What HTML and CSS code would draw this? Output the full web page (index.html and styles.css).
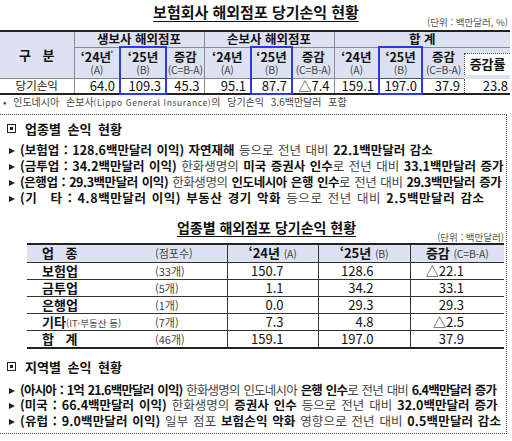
FILE: index.html
```html
<!DOCTYPE html>
<html lang="ko">
<head>
    <meta charset="UTF-8">
    <title>보험회사 해외점포 당기손익 현황</title>
    <link rel="stylesheet" href="styles.css">
</head>
<body>
    <div class="head">
        <div class="title">보험회사 해외점포 당기손익 현황</div>
        <div class="unit">(단위 : 백만달러, %)</div>
    </div>

    <table class="summary">
        <colgroup>
            <col><col><col><col><col><col><col><col><col><col><col>
        </colgroup>
        <tr class="grp">
            <th class="label first" rowspan="2">구 분</th>
            <th colspan="3">생보사 해외점포</th>
            <th colspan="3">손보사 해외점포</th>
            <th class="last" colspan="4">합 계</th>
        </tr>
        <tr class="sub">
            <th>‘24년<sup>ˈ</sup><span class="ab">(A)</span></th>
            <th class="hl">‘25년<span class="ab">(B)</span></th>
            <th>증감<span class="ab">(C=B-A)</span></th>
            <th>‘24년<span class="ab">(A)</span></th>
            <th class="hl">‘25년<span class="ab">(B)</span></th>
            <th>증감<span class="ab">(C=B-A)</span></th>
            <th>‘24년<span class="ab">(A)</span></th>
            <th class="hl">‘25년<span class="ab">(B)</span></th>
            <th>증감<span class="ab">(C=B-A)</span></th>
            <th class="rate last"><div class="rate-box">증감률</div></th>
        </tr>
        <tr class="data">
            <td class="label first">당기손익</td>
            <td>64.0</td>
            <td class="hl">109.3</td>
            <td>45.3</td>
            <td>95.1</td>
            <td class="hl">87.7</td>
            <td>△7.4</td>
            <td>159.1</td>
            <td class="hl">197.0</td>
            <td>37.9</td>
            <td class="rate last"><div class="rate-val">23.8</div></td>
        </tr>
    </table>

    <p class="note">• 인도네시아 손보사<small>(Lippo General Insurance)</small>의 당기손익 3.6백만달러 포함</p>

    <div class="box">
        <div class="sec"><span class="sq"></span>업종별 손익 현황</div>
        <ul class="lines">
            <li><b>(보험업 : 128.6백만달러 이익) 자연재해</b> 등으로 전년 대비 <b>22.1백만달러 감소</b></li>
            <li><b>(금투업 : 34.2백만달러 이익)</b> 한화생명의 <b>미국 증권사 인수</b>로 전년 대비 <b>33.1백만달러 증가</b></li>
            <li class="tight"><b>(은행업 : 29.3백만달러 이익)</b> 한화생명의 <b>인도네시아 은행 인수</b>로 전년 대비 <b>29.3백만달러 증가</b></li>
            <li class="loose"><b>(기　타 : 4.8백만달러 이익) 부동산 경기 악화</b> 등으로 전년 대비 <b>2.5백만달러 감소</b></li>
        </ul>

        <div class="head head-sm">
            <div class="title">업종별 해외점포 당기손익 현황</div>
            <div class="unit">(단위 : 백만달러)</div>
        </div>

        <table class="sector">
            <colgroup>
                <col><col><col><col><col>
            </colgroup>
            <tr>
                <th class="name">업 종</th>
                <th class="cnt">(점포수)</th>
                <th>‘24년 <span class="ab">(A)</span></th>
                <th>‘25년 <span class="ab">(B)</span></th>
                <th>증감 <span class="ab">(C=B-A)</span></th>
            </tr>
            <tr>
                <td class="name">보험업</td>
                <td class="cnt">(33개)</td>
                <td>150.7</td>
                <td>128.6</td>
                <td>△22.1</td>
            </tr>
            <tr>
                <td class="name">금투업</td>
                <td class="cnt">(5개)</td>
                <td>1.1</td>
                <td>34.2</td>
                <td>33.1</td>
            </tr>
            <tr>
                <td class="name">은행업</td>
                <td class="cnt">(1개)</td>
                <td>0.0</td>
                <td>29.3</td>
                <td>29.3</td>
            </tr>
            <tr>
                <td class="name">기타<small>(IT·부동산 등)</small></td>
                <td class="cnt">(7개)</td>
                <td>7.3</td>
                <td>4.8</td>
                <td>△2.5</td>
            </tr>
            <tr>
                <td class="name">합 계</td>
                <td class="cnt">(46개)</td>
                <td>159.1</td>
                <td>197.0</td>
                <td>37.9</td>
            </tr>
        </table>

        <div class="sec sec-2"><span class="sq"></span>지역별 손익 현황</div>
        <ul class="lines lines-2">
            <li class="squeeze"><b>(아시아 : 1억 21.6백만달러 이익)</b> 한화생명의 인도네시아 <b>은행 인수</b>로 전년 대비 <b>6.4백만달러 증가</b></li>
            <li class="wide"><b>(미국 : 66.4백만달러 이익)</b> 한화생명의 <b>증권사 인수</b> 등으로 전년 대비 <b>32.0백만달러 증가</b></li>
            <li class="airy"><b>(유럽 : 9.0백만달러 이익)</b> 일부 점포 <b>보험손익 악화</b> 영향으로 전년 대비 <b>0.5백만달러 감소</b></li>
        </ul>
    </div>
</body>
</html>
```

FILE: styles.css
```css
body {
    margin: 0;
    width: 512px;
    background: #fff;
    color: #111;
    font-family: "Noto Sans CJK KR", "Noto Sans", sans-serif;
}

/* titles */
.head {
    display: grid;
    height: 30px;
}

.head > * {
    grid-area: 1 / 1;
}

.title {
    justify-self: center;
    margin-top: 2px;
    font-size: 15px;
    line-height: 20px;
    font-weight: bold;
    text-decoration: underline;
    text-underline-offset: 3px;
}

.unit {
    justify-self: end;
    align-self: end;
    margin: 0 4px 3px 0;
    font-size: 9.5px;
    line-height: 10px;
    color: #555;
}

.head-sm {
    height: 28px;
    margin: 9px 0 0 27px;
}

.head-sm .title {
    margin-top: 3px;
    font-size: 14px;
    line-height: 18px;
}

.head-sm .unit {
    margin: 0 2px 1px 0;
}

/* top summary table */
.summary {
    width: 510px;
    table-layout: fixed;
    border-collapse: collapse;
    border-top: 2px solid #222;
    border-bottom: 2px solid #222;
}

.summary col:nth-child(1) { width: 74px; }
.summary col:nth-child(2) { width: 46px; }
.summary col:nth-child(3) { width: 46px; }
.summary col:nth-child(4) { width: 38px; }
.summary col:nth-child(5) { width: 47px; }
.summary col:nth-child(6) { width: 41px; }
.summary col:nth-child(7) { width: 42px; }
.summary col:nth-child(8) { width: 45px; }
.summary col:nth-child(9) { width: 43px; }
.summary col:nth-child(10) { width: 42px; }
.summary col:nth-child(11) { width: 46px; }

.summary th,
.summary td {
    padding: 0;
    border: 1px solid #8a8a8a;
}

.summary th {
    background: #dde2f3;
    font-size: 12.5px;
    font-weight: bold;
    line-height: 14px;
    text-align: center;
}

.summary .grp th {
    height: 14px;
}

.summary .sub th {
    height: 26px;
}

.summary th.label {
    word-spacing: 8px;
    font-size: 13px;
}

.summary sup {
    font-size: 9px;
    line-height: 0;
}

.ab {
    display: block;
    font-size: 10.5px;
    line-height: 12px;
    font-weight: normal;
    color: #444;
    letter-spacing: -0.2px;
}

.summary .first {
    border-left: none;
}

.summary .last {
    border-right: none;
}

.summary td {
    height: 13px;
    border-top-color: #555;
    font-size: 13px;
    line-height: 13px;
    text-align: right;
    padding-right: 4px;
}

.summary td.label {
    text-align: center;
    padding-right: 0;
    font-size: 11.5px;
}

.summary .hl {
    border: 2px solid #2d3ed8;
}

.summary th.hl {
    border-bottom: 1px solid #555;
}

.summary td.hl {
    border-top: 1px solid #555;
}

.summary th.rate {
    padding: 5px 0 0;
    vertical-align: top;
    border-left-style: hidden;
    border-bottom-style: hidden;
}

.rate-box {
    height: 21px;
    display: flex;
    align-items: center;
    justify-content: center;
    background: #fff;
    border-top: 1px dotted #444;
    border-left: 1px dotted #444;
    font-size: 13px;
}

.summary td.rate {
    padding: 0;
    border-left-style: hidden;
    border-top-style: hidden;
}

.rate-val {
    height: 14px;
    padding-right: 2px;
    border-left: 1px dotted #444;
}

.note {
    margin: 0;
    padding: 0 0 0 3px;
    font-size: 10px;
    line-height: 14px;
    color: #444;
    word-spacing: 4px;
}

.note small {
    font-size: 8.5px;
    letter-spacing: 0.6px;
    word-spacing: 0;
}

/* dotted box */
.box {
    box-sizing: border-box;
    width: 507px;
    margin-top: 5px;
    padding: 5px 0 5px;
    border: 1px dotted #444;
    border-left: none;
}

.sec {
    display: flex;
    align-items: center;
    gap: 9px;
    padding-left: 7px;
    font-size: 13px;
    font-weight: bold;
    line-height: 18px;
    word-spacing: 3px;
}

.sq {
    width: 7px;
    height: 7px;
    border: 1px solid #222;
    background: #222;
    box-shadow: inset 0 0 0 2px #fff;
}

.lines {
    list-style: none;
    margin: 4px 0 0;
    padding: 0 0 0 9px;
    font-size: 12.5px;
    line-height: 16px;
    color: #444;
    white-space: nowrap;
    word-spacing: 1px;
}

.lines li::before {
    content: "";
    display: inline-block;
    margin-right: 5px;
    border-left: 6px solid #222;
    border-top: 3px solid transparent;
    border-bottom: 3px solid transparent;
    vertical-align: 1px;
}

.lines b {
    color: #111;
}

/* per-line character spacing, as in the source document */
.lines .squeeze {
    letter-spacing: -0.8px;
}

.lines .tight {
    letter-spacing: -0.45px;
}

.lines .loose {
    letter-spacing: 0.6px;
}

.lines .wide {
    word-spacing: 1.5px;
}

.lines .airy {
    letter-spacing: 0.15px;
}

.sec-2 {
    margin-top: 9px;
}

.lines-2 {
    margin-top: 6px;
    line-height: 15.5px;
}

/* sector table */
.sector {
    width: 477px;
    margin-left: 27px;
    table-layout: fixed;
    border-collapse: collapse;
    border-top: 2px solid #222;
    border-bottom: 2px solid #222;
}

.sector col:nth-child(1) { width: 123px; }
.sector col:nth-child(2) { width: 77px; }
.sector col:nth-child(3) { width: 91px; }
.sector col:nth-child(4) { width: 92px; }
.sector col:nth-child(5) { width: 94px; }

.sector th,
.sector td {
    height: 16px;
    padding: 0;
    border-top: 1px solid #333;
    border-left: 1px solid #333;
    font-size: 13px;
    line-height: 16px;
    text-align: right;
}

.sector th {
    height: 17px;
    background: #dde2f3;
    text-align: center;
}

.sector th .ab {
    display: inline;
    font-size: 10.5px;
}

.sector .name {
    border-left: none;
    padding-left: 15px;
    text-align: left;
    font-weight: bold;
    word-spacing: 8px;
}

.sector .name small {
    font-size: 9.5px;
    line-height: 1;
    font-weight: normal;
    color: #444;
    word-spacing: 0;
}

.sector .cnt {
    border-left: none;
    padding-left: 5px;
    text-align: left;
    font-size: 11px;
    font-weight: normal;
    color: #444;
}

.sector td:nth-child(3) { padding-right: 34px; }
.sector td:nth-child(4) { padding-right: 36px; }
.sector td:nth-child(5) { padding-right: 40px; }
```
